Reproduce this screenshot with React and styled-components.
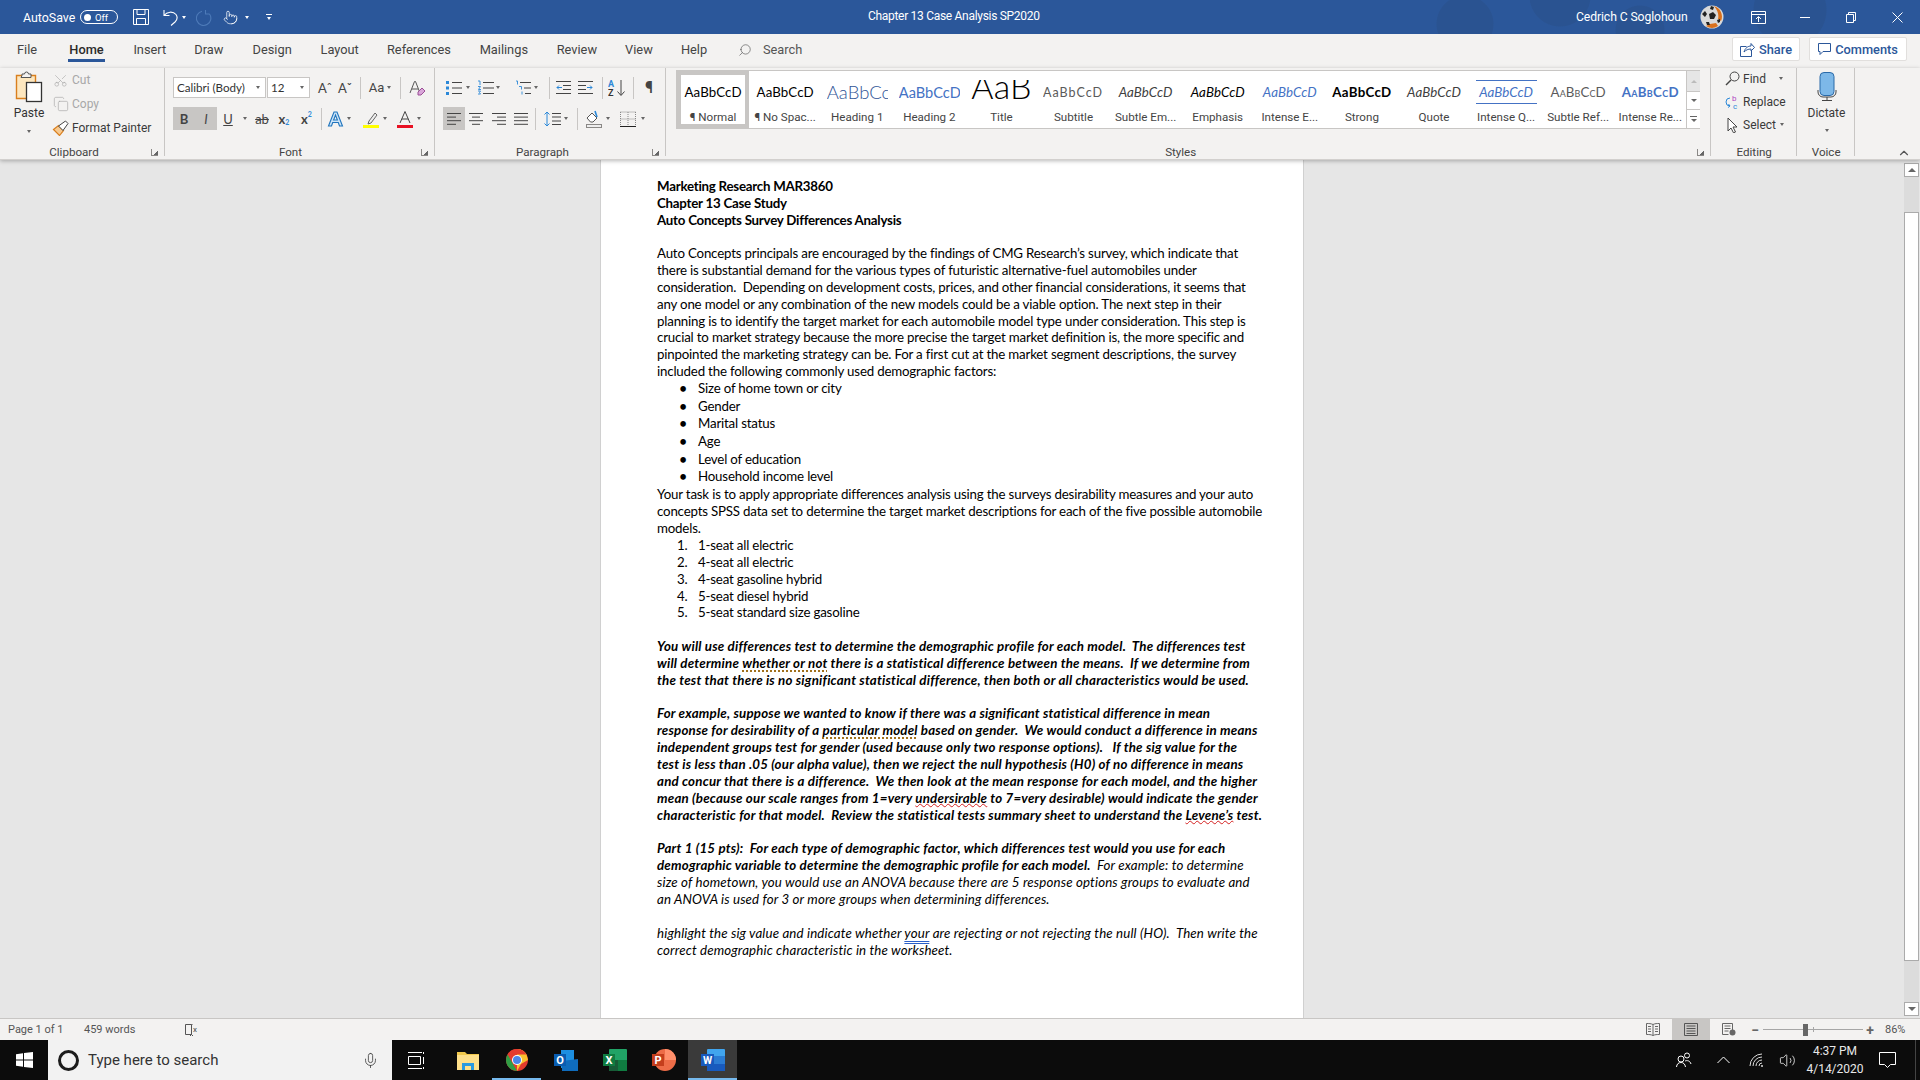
import React from 'react';
import styled, { createGlobalStyle } from 'styled-components';
import { Search, Scissors, Copy, Mic, Pointer, ChevronUp, Volume2 } from 'lucide-react';

const UI_FONT = 'Roboto, "Open Sans", sans-serif';
const DOC_FONT = 'Lato, "Open Sans", sans-serif';

const GlobalStyle = createGlobalStyle`
  html, body { margin: 0; padding: 0; background: #e6e6e6; }
  body { font-family: ${UI_FONT}; overflow: hidden; }
  * { box-sizing: border-box; }
`;

const Shell = styled.div`
  width: 1920px;
  height: 1080px;
  display: flex;
  flex-direction: column;
  overflow: hidden;
`;

/* title bar */
const TitleBar = styled.div`
  height: 34px;
  flex: none;
  display: flex;
  align-items: center;
  color: #fff;
  font-size: 12.4px;
  background-color: #2b579a;
  background-image:
    radial-gradient(circle at 1465px 24px, #2a5391 0 28px, transparent 29px),
    radial-gradient(circle at 1560px -4px, #2a5391 0 30px, transparent 31px),
    radial-gradient(circle at 1640px 30px, #2a5391 0 24px, transparent 25px),
    radial-gradient(circle at 1790px 10px, #2a5391 0 36px, transparent 37px);
`;
const AutoSave = styled.span`
  margin-left: 23px;
  width: 57px;
`;
const Toggle = styled.span`
  width: 38px;
  height: 14px;
  border: 1px solid #fff;
  border-radius: 7px;
  display: flex;
  align-items: center;
  padding-left: 3px;
  gap: 4px;
  font-size: 9.5px;
  margin-right: 15px;
  &::before {
    content: '';
    width: 7px;
    height: 7px;
    border-radius: 50%;
    background: #fff;
  }
`;
const TitleSlot = styled.span`
  width: ${p => p.$w}px;
  flex: none;
  display: flex;
  align-items: center;
  gap: ${p => p.$gap ?? 4}px;
  flex-direction: ${p => (p.$stack ? 'column' : 'row')};
`;
const DocName = styled.span`
  margin-left: 595px;
  width: 708px;
  font-size: 12px;
  letter-spacing: -0.3px;
  margin-top: -2px;
`;
const UserName = styled.span`
  width: 124px;
  font-size: 12.2px;
  letter-spacing: -0.1px;
`;
const WinButton = styled.span`
  width: ${p => p.$w}px;
  flex: none;
  display: flex;
  justify-content: center;
`;
const TinyCaret = styled.span`
  display: block;
  flex: none;
  width: 0;
  height: 0;
  border-left: ${p => p.$s || 2.5}px solid transparent;
  border-right: ${p => p.$s || 2.5}px solid transparent;
  border-top: ${p => (p.$s ? p.$s : 3)}px solid ${p => p.$c || '#666'};
  transform: ${p => (p.$up ? 'rotate(180deg)' : 'none')};
  margin-left: ${p => p.$ml || 0}px;
`;

/* tabs */
const TabRow = styled.div`
  height: 34px;
  flex: none;
  display: flex;
  align-items: flex-start;
  background: #f3f2f1;
  padding-left: 17px;
  padding-top: 3px;
  gap: 28.4px;
`;
const Tab = styled.span`
  width: ${p => p.$w}px;
  flex: none;
  height: 25px;
  margin-right: ${p => p.$mr || 0}px;
  line-height: 26px;
  text-align: center;
  font-size: 12.8px;
  white-space: nowrap;
  color: ${p => (p.$on ? '#2b2b2b' : '#444')};
  font-weight: ${p => (p.$on ? 500 : 400)};
  border-bottom: ${p => (p.$on ? '3px solid #2b579a' : '0')};
`;
const SearchBox = styled.span`
  display: flex;
  align-items: center;
  gap: 11px;
  height: 26px;
  margin-left: 2px;
  font-size: 12.8px;
  color: #555;
  line-height: 1;
`;
const ShareRow = styled.div`
  margin-left: auto;
  display: flex;
  gap: 9px;
  padding-right: 13px;
`;
const ShareButton = styled.span`
  width: ${p => p.$w}px;
  height: 24px;
  background: #fff;
  border: 1px solid #e1dfdd;
  border-radius: 2px;
  color: #2b579a;
  font-size: 12.8px;
  font-weight: 500;
  display: flex;
  align-items: center;
  justify-content: center;
  gap: 4px;
`;

/* ribbon */
const Ribbon = styled.div`
  height: 92px;
  flex: none;
  display: flex;
  align-items: flex-start;
  background: #f3f2f1;
  box-shadow: 0 1px 4px rgba(0, 0, 0, 0.28);
  border-bottom: 1px solid #d2d0ce;
  position: relative;
  z-index: 2;
  color: #444;
  font-size: 11.6px;
`;
const Group = styled.div`
  width: ${p => p.$w}px;
  height: 88px;
  flex: none;
  display: flex;
  flex-direction: column;
  border-right: 1px solid #c8c6c4;
`;
const GroupBody = styled.div`
  height: 76px;
  flex: none;
  display: flex;
  flex-direction: ${p => (p.$rows ? 'column' : 'row')};
  padding-left: ${p => p.$pad || 0}px;
  padding-top: ${p => (p.$rows ? 9 : 0)}px;
`;
const Foot = styled.div`
  height: 12px;
  display: grid;
  grid-template-columns: 1fr auto 1fr;
  line-height: 16px;
  font-size: 11.6px;
  color: #444;
  padding-right: 6px;
`;
const FootLabel = styled.span`
  grid-column: 2;
  transform: translateX(${p => p.$x || 0}px);
`;
const Launcher = styled.span`
  grid-column: 3;
  justify-self: end;
  width: 7px;
  height: 7px;
  margin-top: 5px;
  border-left: 1px solid #8a8886;
  border-bottom: 1px solid #8a8886;
  position: relative;
  &::after {
    content: '';
    position: absolute;
    right: 0;
    bottom: 0;
    width: 4px;
    height: 4px;
    background: linear-gradient(135deg, transparent 45%, #666 50%);
  }
`;
const PasteButton = styled.div`
  width: 46px;
  margin-left: 6px;
  flex: none;
  display: flex;
  flex-direction: column;
  align-items: center;
  padding-top: 3px;
  font-size: 12px;
  color: #333;
`;
const PasteLabel = styled.span`
  margin-top: ${p => p.$mt ?? 2}px;
  line-height: 16px;
`;
const StackCaret = styled.span`
  margin-top: ${p => p.$mt ?? 9}px;
`;
const SmallStack = styled.div`
  display: flex;
  flex-direction: column;
`;
const SmallRow = styled.div`
  height: ${p => p.$h || 24}px;
  display: flex;
  align-items: center;
  gap: ${p => p.$gap ?? 3}px;
  font-size: 12px;
  color: ${p => (p.$off ? '#a8a8a8' : '#3a3a3a')};
  white-space: nowrap;
`;
const IconCol = styled.span`
  width: ${p => p.$w || 17}px;
  flex: none;
  display: flex;
  justify-content: center;
`;
const ToolRow = styled.div`
  height: ${p => p.$h}px;
  flex: none;
  display: flex;
  align-items: center;
  margin-bottom: ${p => p.$mb || 0}px;
`;
const Tool = styled.span`
  width: ${p => p.$w}px;
  height: 23px;
  flex: none;
  display: flex;
  align-items: center;
  justify-content: ${p => (p.$left ? 'flex-start' : 'center')};
  gap: ${p => p.$gap ?? 3}px;
  padding-left: ${p => p.$pl || 0}px;
  margin-left: ${p => p.$ml || 0}px;
  background: ${p => (p.$on ? '#c8c6c4' : 'transparent')};
  color: #444;
  font-family: ${p => (p.$doc ? DOC_FONT : UI_FONT)};
  font-size: ${p => p.$fs || 13}px;
  font-weight: ${p => p.$fw || 400};
  font-style: ${p => (p.$it ? 'italic' : 'normal')};
  text-decoration: ${p => p.$deco || 'none'};
`;
const Script = styled.span`
  font-size: 7px;
  line-height: 7px;
  color: #2b88d8;
  transform: translateY(${p => (p.$up ? -4 : 4)}px);
`;
const Combo = styled.span`
  width: ${p => p.$w}px;
  height: 21px;
  flex: none;
  background: #fff;
  border: 1px solid #c8c6c4;
  margin-right: 1px;
  display: flex;
  align-items: center;
  justify-content: space-between;
  padding: 0 5px 0 3px;
  font-family: ${DOC_FONT};
  font-size: 11.6px;
  color: #333;
`;
const Sep = styled.span`
  width: 1px;
  height: 22px;
  flex: none;
  background: #c8c6c4;
  margin: 0 ${p => p.$r ?? 3}px 0 ${p => p.$l ?? 3}px;
`;

/* style gallery */
const Gallery = styled.div`
  width: 1024px;
  height: 59px;
  margin-top: 2px;
  display: flex;
  background: #fff;
  border: 1px solid #c8c6c4;
  flex: none;
`;
const GalleryItems = styled.div`
  flex: 1;
  display: flex;
`;
const StyleItem = styled.div`
  width: 72.1px;
  flex: none;
  height: 57px;
  padding-top: ${p => (p.$on ? 5 : 9)}px;
  border: ${p => (p.$on ? '4px solid #c8c6c4' : '0')};
  display: flex;
  flex-direction: column;
  align-items: center;
`;
const Sample = styled.div`
  width: 61px;
  height: 24px;
  flex: none;
  overflow: hidden;
  white-space: nowrap;
  display: flex;
  align-items: center;
  justify-content: ${p => (p.$clip ? 'flex-start' : 'center')};
  font-family: ${DOC_FONT};
  font-size: ${p => p.$fs || 13.3}px;
  font-weight: ${p => p.$fw || 400};
  font-style: ${p => (p.$it ? 'italic' : 'normal')};
  font-variant: ${p => (p.$caps ? 'small-caps' : 'normal')};
  letter-spacing: ${p => p.$ls ?? 0.1}px;
  color: ${p => p.$c || '#000'};
  border-top: ${p => (p.$rule ? '1px solid #4472c4' : '0')};
  border-bottom: ${p => (p.$rule ? '1px solid #4472c4' : '0')};
`;
const TitleSample = styled(Sample)`
  font-size: 34px;
  line-height: 24px;
  align-items: flex-start;
  font-weight: 300;
  span { display: block; margin-top: -6px; }
`;
const StyleLabel = styled.div`
  margin-top: 4px;
  line-height: 18px;
  font-size: 11.6px;
  color: #444;
  white-space: nowrap;
`;
const GalleryScroll = styled.div`
  width: 14px;
  flex: none;
  margin-left: auto;
  display: flex;
  flex-direction: column;
  border-left: 1px solid #c8c6c4;
`;
const GalleryBtn = styled.div`
  height: ${p => p.$h}px;
  flex: none;
  display: flex;
  flex-direction: column;
  gap: 2px;
  align-items: center;
  justify-content: center;
  background: ${p => (p.$off ? '#e6e6e6' : '#fff')};
  border-bottom: ${p => (p.$last ? 0 : '1px solid #c8c6c4')};
`;
const MoreBar = styled.span`
  width: ${p => p.$w || 7}px;
  height: 1px;
  background: ${p => p.$c || '#666'};
`;
const EditStack = styled.div`
  display: flex;
  flex-direction: column;
  padding-left: 13px;
  margin-top: -1px;
  color: #3a3a3a;
`;
const VoiceCol = styled.div`
  width: 57px;
  display: flex;
  flex-direction: column;
  align-items: center;
  padding: 4px 0 0 2px;
  font-size: 12px;
  color: #3a3a3a;
`;
const Collapse = styled.div`
  margin-left: 42px;
  margin-top: 78px;
  color: #555;
  display: flex;
`;

/* document */
const Canvas = styled.div`
  flex: 1;
  display: flex;
  background: #e6e6e6;
  min-height: 0;
`;
const PageArea = styled.div`
  flex: 1;
  display: flex;
  justify-content: center;
`;
const Page = styled.div`
  width: 704px;
  height: 100%;
  background: #fff;
  border-left: 1px solid #d0d0d0;
  border-right: 1px solid #d0d0d0;
  padding: 17.9px 0 0 56px;
  color: #000;
  font-family: ${DOC_FONT};
  font-size: 13.3px;
  font-kerning: normal;
`;
const spacingOf = p => {
  if (p.$b && p.$i) return 0.2;
  if (p.$i) return 0.14;
  if (p.$b) return -0.24;
  return -0.19;
};
const Line = styled.div`
  height: ${p => p.$h || 17}px;
  line-height: ${p => p.$h || 17}px;
  white-space: pre;
  padding-left: ${p => (p.$item ? 41 : 0)}px;
  font-weight: ${p => (p.$b ? 700 : 400)};
  font-style: ${p => (p.$i ? 'italic' : 'normal')};
  letter-spacing: ${spacingOf}px;
  display: flex;
`;
const Marker = styled.span`
  width: 18px;
  margin-left: -24px;
  margin-right: 6px;
  flex: none;
  text-align: ${p => (p.$num ? 'left' : 'center')};
  padding-left: ${p => (p.$num ? 3 : 0)}px;
  font-size: ${p => (p.$num ? 13.3 : 15)}px;
`;
const Plain = styled.span`
  font-weight: 400;
  letter-spacing: 0.14px;
`;
const Grammar = styled.span`
  text-decoration: underline dotted #a0701c 2px;
  text-underline-offset: 3px;
`;
const Spell = styled.span`
  text-decoration: underline wavy #d42020 1px;
  text-underline-offset: 0;
`;
const Clarity = styled.span`
  text-decoration: underline double #2b5fc7 1px;
  text-underline-offset: 3px;
`;
const ScrollBar = styled.div`
  width: 15px;
  margin-right: 1px;
  flex: none;
  display: flex;
  flex-direction: column;
  padding-top: 3px;
  padding-bottom: 2px;
`;
const ScrollBtn = styled.div`
  height: 14px;
  flex: none;
  background: #fff;
  border: 1px solid #ababab;
  display: flex;
  align-items: center;
  justify-content: center;
`;
const ScrollTrack = styled.div`
  flex: 1;
  background: #dcdcdc;
  display: flex;
  flex-direction: column;
  padding-top: 35px;
  padding-bottom: 41px;
`;
const ScrollThumb = styled.div`
  flex: 1;
  background: #fff;
  border: 1px solid #ababab;
`;

/* status bar */
const StatusBar = styled.div`
  height: 22px;
  flex: none;
  display: flex;
  align-items: center;
  background: #f3f2f1;
  border-top: 1px solid #c8c6c4;
  font-size: 11px;
  color: #555;
  padding-left: 8px;
`;
const StatusText = styled.span`
  width: ${p => p.$w}px;
  flex: none;
`;
const ViewBtn = styled.span`
  width: ${p => p.$w}px;
  height: 21px;
  flex: none;
  display: flex;
  align-items: center;
  justify-content: center;
  background: ${p => (p.$on ? '#c8c6c4' : 'transparent')};
`;
const Zoomer = styled.span`
  width: 100px;
  height: 1px;
  flex: none;
  background: #a6a6a6;
  margin: 0 -6px 0 5px;
  display: flex;
  align-items: center;
  padding-left: 40px;
  gap: 5px;
`;
const ZoomThumb = styled.span`
  width: 5px;
  height: 12px;
  background: #666;
  flex: none;
`;
const ZoomTick = styled.span`
  width: 1px;
  height: 5px;
  background: #a6a6a6;
  flex: none;
`;
const ZoomSign = styled.span`
  font-size: 14px;
  font-weight: 700;
  color: #666;
  width: 6px;
  line-height: 1;
  display: flex;
  justify-content: center;
`;

/* taskbar */
const Taskbar = styled.div`
  height: 40px;
  flex: none;
  display: flex;
  align-items: stretch;
  background: #0c0c0c;
  color: #fff;
`;
const StartBtn = styled.div`
  width: 48px;
  flex: none;
  display: flex;
  align-items: center;
  justify-content: center;
`;
const TaskSearch = styled.div`
  width: 344px;
  flex: none;
  background: #f2f2f2;
  color: #333;
  display: flex;
  align-items: center;
  padding-left: 10px;
  font-family: ${UI_FONT};
  font-size: 15px;
`;
const Ring = styled.span`
  width: 21px;
  height: 21px;
  border: 3px solid #1c1c1c;
  border-radius: 50%;
  flex: none;
  margin-right: 9px;
`;
const TaskMic = styled.span`
  margin-left: auto;
  margin-right: 13px;
  display: flex;
`;
const TaskIcon = styled.div`
  width: ${p => p.$w || 49}px;
  flex: none;
  display: flex;
  align-items: center;
  justify-content: center;
  background: ${p => (p.$active ? '#3a3a3a' : 'transparent')};
  margin-right: ${p => p.$mr || 0}px;
  border-bottom: ${p => (p.$run ? '2px solid #76b9ed' : '2px solid transparent')};
  border-top: 2px solid transparent;
`;
const Tray = styled.div`
  margin-left: auto;
  display: flex;
  align-items: center;
  padding-right: 4px;
`;
const TrayIcon = styled.span`
  width: ${p => p.$w}px;
  flex: none;
  display: flex;
  justify-content: center;
`;
const Clock = styled.div`
  width: 70px;
  flex: none;
  text-align: center;
  font-size: 12px;
  line-height: 18px;
  color: #e8e8e8;
`;
const ShowDesktop = styled.span`
  width: 1px;
  align-self: stretch;
  margin-left: 11px;
  background: #444;
`;

/* small drawings */
const Ico = ({ w = 16, h = 16, vb, children, c = '#555', sw = 1 }) => (
  <svg width={w} height={h} viewBox={vb || `0 0 ${w} ${h}`} fill="none" stroke={c} strokeWidth={sw} style={{ display: 'block', flex: 'none' }}>
    {children}
  </svg>
);

const LinesIcon = ({ rows, c = '#444' }) => (
  <Ico w={18} h={16} c={c}>
    {rows.map(([x1, x2], i) => (
      <line key={i} x1={x1} x2={x2} y1={2.5 + i * 3.6} y2={2.5 + i * 3.6} />
    ))}
  </Ico>
);

const styleItems = [
  { label: '¶ Normal', text: 'AaBbCcD' },
  { label: '¶ No Spac...', text: 'AaBbCcD' },
  { label: 'Heading 1', text: 'AaBbCcD', $fs: 18.5, $c: '#2f5496', $fw: 300, $ls: 0, $clip: true },
  { label: 'Heading 2', text: 'AaBbCcD', $fs: 14.6, $c: '#4472c4', $ls: 0, $clip: true },
  { label: 'Title', text: 'AaB' },
  { label: 'Subtitle', text: 'AaBbCcD', $c: '#5a5a5a', $ls: 1, $fs: 12.5, $clip: true },
  { label: 'Subtle Em...', text: 'AaBbCcD', $it: true, $c: '#404040' },
  { label: 'Emphasis', text: 'AaBbCcD', $it: true },
  { label: 'Intense E...', text: 'AaBbCcD', $it: true, $c: '#4472c4' },
  { label: 'Strong', text: 'AaBbCcD', $fw: 700, $ls: 0.3 },
  { label: 'Quote', text: 'AaBbCcD', $it: true, $c: '#404040' },
  { label: 'Intense Q...', text: 'AaBbCcD', $it: true, $c: '#4472c4', $rule: true },
  { label: 'Subtle Ref...', text: 'AaBbCcD', $caps: true, $c: '#5a5a5a' },
  { label: 'Intense Re...', text: 'AaBbCcD', $caps: true, $fw: 700, $c: '#4472c4', $ls: 0.3 },
];

const Groups = () => (
  <>
    <Group $w={165}>
      <GroupBody>
        <PasteButton>
          <Ico w={28} h={32}>
            <path d="M1.5 4.5h19v23h-19z" stroke="#d97f1e" strokeWidth="1.4" fill="#fde7bf" />
            <path d="M7 4.5V3h2.5a2 2 0 0 1 4 0H16v3.5H6z" stroke="#555" fill="#f3f2f1" />
            <rect x="11.5" y="11.5" width="15" height="19" fill="#fff" stroke="#333" strokeWidth="1.3" />
          </Ico>
          <PasteLabel>Paste</PasteLabel>
          <StackCaret><TinyCaret /></StackCaret>
        </PasteButton>
        <SmallStack>
          <SmallRow $off><IconCol><Scissors size={15} strokeWidth={1} color="#a8a8a8" style={{ transform: 'rotate(-90deg)' }} /></IconCol>Cut</SmallRow>
          <SmallRow $off><IconCol><Copy size={16} strokeWidth={1} color="#a8a8a8" /></IconCol>Copy</SmallRow>
          <SmallRow>
            <IconCol>
              <Ico w={17} h={16}>
                <path d="M1.5 9.5l5-4 5 5-4 5z" fill="#f7c98f" stroke="#d97f1e" strokeWidth="1.2" />
                <path d="M6.5 6l7-5 2.5 2.5-5 7z" fill="#fff" stroke="#444" />
              </Ico>
            </IconCol>
            Format Painter
          </SmallRow>
        </SmallStack>
      </GroupBody>
      <Foot><FootLabel $x={-5}>Clipboard</FootLabel><Launcher /></Foot>
    </Group>

    <Group $w={270}>
      <GroupBody $rows $pad={8}>
        <ToolRow $h={21} $mb={9}>
          <Combo $w={93}>Calibri (Body)<TinyCaret /></Combo>
          <Combo $w={43}>12<TinyCaret /></Combo>
          <Tool $w={20} $doc $ml={4}>Aˆ</Tool>
          <Tool $w={20} $doc>Aˇ</Tool>
          <Sep $l={5} $r={0} />
          <Tool $w={38} $gap={3}>Aa<TinyCaret /></Tool>
          <Sep $l={1} $r={2} />
          <Tool $w={28}>
            <Ico w={17} h={16}>
              <path d="M1 13L5.5 1.5h1L11 13M3 9h6" stroke="#555" />
              <path d="M9 12l4-4 3 3-4 4H9z" fill="#d9a6d9" stroke="#9b4f96" />
            </Ico>
          </Tool>
        </ToolRow>
        <ToolRow $h={23}>
          <Tool $w={22} $on $fw={700} $doc>B</Tool>
          <Tool $w={22} $on $it $doc>I</Tool>
          <Tool $w={22} $doc $deco="underline">U</Tool>
          <Tool $w={12}><TinyCaret /></Tool>
          <Tool $w={22} $doc $deco="line-through">ab</Tool>
          <Tool $w={22} $fw={700} $gap={0} $doc>x<Script>2</Script></Tool>
          <Tool $w={23} $fw={700} $gap={0} $doc>x<Script $up>2</Script></Tool>
          <Sep $l={3} $r={2} />
          <Tool $w={30} $gap={2}>
            <Ico w={18} h={18}>
              <path d="M1.5 16L7 2h3l5.5 14h-3l-1.2-3.5H5.7L4.5 16zM6.6 10h3.8L8.5 5z" fill="#cde4f7" stroke="#1f74bd" strokeWidth="1.1" />
            </Ico>
            <TinyCaret />
          </Tool>
          <Tool $w={34} $gap={4} $ml={4}>
            <Ico w={16} h={18}>
              <path d="M6 11l6-8 2 2-6 8-3 1z" fill="#eee" stroke="#666" />
              <rect x="0" y="15" width="16" height="3" fill="#ffff00" stroke="none" />
            </Ico>
            <TinyCaret />
          </Tool>
          <Tool $w={34} $gap={4}>
            <Ico w={16} h={18}>
              <path d="M3 13L8 1.5 13 13M4.8 9h6.4" stroke="#444" />
              <rect x="0" y="15" width="16" height="3" fill="#e81123" stroke="none" />
            </Ico>
            <TinyCaret />
          </Tool>
        </ToolRow>
      </GroupBody>
      <Foot><FootLabel $x={-6}>Font</FootLabel><Launcher /></Foot>
    </Group>

    <Group $w={231}>
      <GroupBody $rows $pad={8}>
        <ToolRow $h={21} $mb={9}>
          <Tool $w={33} $left $pl={3} $gap={2}>
            <Ico w={18} h={16}>
              <rect x="0" y="1" width="3" height="3" fill="#2b88d8" stroke="none" />
              <rect x="0" y="6.5" width="3" height="3" fill="#2b88d8" stroke="none" />
              <rect x="0" y="12" width="3" height="3" fill="#2b88d8" stroke="none" />
              <path d="M6 2.5h10M6 8h10M6 13.5h10" stroke="#444" />
            </Ico>
            <TinyCaret />
          </Tool>
          <Tool $w={38} $left $pl={1} $gap={1}>
            <Ico w={18} h={16}>
              <path d="M1 1h2v4M1 6.5h2.5l-2 3h2.5M1 11h2.5l-1 1.5 1 1.5H1" stroke="#2b88d8" strokeWidth="0.9" />
              <path d="M6 2.5h11M6 8h11M6 13.5h11" stroke="#444" />
            </Ico>
            <TinyCaret />
          </Tool>
          <Tool $w={31} $left $pl={1} $gap={1}>
            <Ico w={18} h={16}>
              <path d="M1 1h1.5v3.5M4 6.5h2.5v3M7 11.5v3" stroke="#2b88d8" strokeWidth="0.9" />
              <path d="M5 2.5h11M9 8h7M10 13.5h6" stroke="#444" />
            </Ico>
            <TinyCaret />
          </Tool>
          <Sep $l={4} $r={3} />
          <Tool $w={22}>
            <Ico>
              <path d="M0 1.5h15M7 5.5h8M7 9.5h8M0 13.5h15" stroke="#444" />
              <path d="M6 7.5H1M3 5.5l-2 2 2 2" stroke="#2b88d8" />
            </Ico>
          </Tool>
          <Tool $w={22}>
            <Ico>
              <path d="M0 1.5h15M0 5.5h8M0 9.5h8M0 13.5h15" stroke="#444" />
              <path d="M9 7.5h5M12 5.5l2 2-2 2" stroke="#2b88d8" />
            </Ico>
          </Tool>
          <Sep $l={5} $r={2} />
          <Tool $w={24}>
            <Ico w={18} h={18}>
              <text x="0" y="8" fontFamily={UI_FONT} fontSize="9" fontWeight="700" fill="#2b88d8" stroke="none">A</text>
              <text x="0" y="17" fontFamily={UI_FONT} fontSize="9" fontWeight="700" fill="#333" stroke="none">Z</text>
              <path d="M13 1v15M9.5 12.5L13 16.5l3.5-4" stroke="#444" />
            </Ico>
          </Tool>
          <Sep $l={4} $r={3} />
          <Tool $w={24} $fs={16} $fw={700}>¶</Tool>
        </ToolRow>
        <ToolRow $h={23}>
          <Tool $w={22} $on><LinesIcon rows={[[2, 16], [2, 11], [2, 16], [2, 11]]} /></Tool>
          <Tool $w={22}><LinesIcon rows={[[2, 16], [5, 13], [2, 16], [5, 13]]} /></Tool>
          <Tool $w={23}><LinesIcon rows={[[2, 16], [7, 16], [2, 16], [7, 16]]} /></Tool>
          <Tool $w={22}><LinesIcon rows={[[2, 16], [2, 16], [2, 16], [2, 16]]} /></Tool>
          <Sep $l={3} $r={4} />
          <Tool $w={32} $gap={3}>
            <Ico w={17} h={16}>
              <path d="M3 1v14M0.5 3.5L3 1l2.5 2.5M0.5 12.5L3 15l2.5-2.5" stroke="#2b88d8" />
              <path d="M8 2.5h9M8 6h9M8 10h9M8 13.5h9" stroke="#444" />
            </Ico>
            <TinyCaret />
          </Tool>
          <Sep $l={5} $r={3} />
          <Tool $w={34} $gap={4}>
            <Ico w={16} h={18}>
              <path d="M1 8l5-5 5 5-4 4-2.5 0z" stroke="#555" fill="#fff" />
              <path d="M9 1l2 6" stroke="#2b88d8" strokeWidth="1.6" />
              <rect x="0.5" y="14.5" width="15" height="3" fill="#eee" stroke="#8a8886" />
            </Ico>
            <TinyCaret />
          </Tool>
          <Tool $w={34} $gap={5}>
            <Ico w={16} h={16}>
              <path d="M.5 1h15M.5 8h15M8 1v14M.5 1v14M15.5 1v14" stroke="#888" strokeDasharray="1 1" />
              <path d="M0 15.5h16" stroke="#222" />
            </Ico>
            <TinyCaret />
          </Tool>
        </ToolRow>
      </GroupBody>
      <Foot><FootLabel $x={-4.6}>Paragraph</FootLabel><Launcher /></Foot>
    </Group>

    <Group $w={1045}>
      <GroupBody $pad={10}>
        <Gallery>
          <GalleryItems>
            {styleItems.map(({ label, text, ...s }) => (
              <StyleItem key={label} $on={label === '¶ Normal'}>
                {label === 'Title' ? <TitleSample {...s}><span>{text}</span></TitleSample> : <Sample {...s}>{text}</Sample>}
                <StyleLabel>{label}</StyleLabel>
              </StyleItem>
            ))}
          </GalleryItems>
          <GalleryScroll>
            <GalleryBtn $h={21} $off><TinyCaret $s={3.5} $c="#bbb" $up /></GalleryBtn>
            <GalleryBtn $h={18}><TinyCaret $s={3} /></GalleryBtn>
            <GalleryBtn $h={18} $last><MoreBar /><TinyCaret $s={3} /></GalleryBtn>
          </GalleryScroll>
        </Gallery>
      </GroupBody>
      <Foot><FootLabel $x={-4.3}>Styles</FootLabel><Launcher /></Foot>
    </Group>

    <Group $w={86}>
      <GroupBody>
        <EditStack>
          <SmallRow $h={23} $gap={2}>
            <IconCol $w={17}>
              <Ico w={15} h={15}><circle cx="9.5" cy="5.5" r="4.5" stroke="#444" /><path d="M6 9L1 14" stroke="#444" strokeWidth="1.5" /></Ico>
            </IconCol>
            Find<TinyCaret $ml={11} />
          </SmallRow>
          <SmallRow $h={23} $gap={2}>
            <IconCol $w={17}>
              <Ico w={16} h={16}>
                <text x="7" y="7" fontFamily={UI_FONT} fontSize="8" fill="#b146c2" stroke="none">b</text>
                <text x="8" y="15" fontFamily={UI_FONT} fontSize="8" fill="#2b88d8" stroke="none">c</text>
                <path d="M5 4a4 4 0 0 0 0 8M3.5 10L5 12l-2 1.5" stroke="#2b88d8" />
              </Ico>
            </IconCol>
            Replace
          </SmallRow>
          <SmallRow $h={23} $gap={2}>
            <IconCol $w={17}>
              <Ico w={13} h={16}><path d="M2 1l9 9H7l2.5 5-2 .8L5 11l-3 3z" stroke="#444" fill="#fff" /></Ico>
            </IconCol>
            Select<TinyCaret $ml={2} />
          </SmallRow>
        </EditStack>
      </GroupBody>
      <Foot><FootLabel $x={3.7}>Editing</FootLabel></Foot>
    </Group>

    <Group $w={58}>
      <GroupBody>
        <VoiceCol>
          <Ico w={20} h={29}>
            <rect x="3" y="0.5" width="14" height="23" rx="4" fill="#7db8e8" stroke="#2b6aa8" />
            <path d="M1 18v2a5 5 0 0 0 5 5h8a5 5 0 0 0 5-5v-2M10 25v3M5 28.5h10" stroke="#444" />
          </Ico>
          <PasteLabel $mt={4}>Dictate</PasteLabel>
          <StackCaret $mt={8}><TinyCaret /></StackCaret>
        </VoiceCol>
      </GroupBody>
      <Foot><FootLabel $x={3.7}>Voice</FootLabel></Foot>
    </Group>
    <Collapse><ChevronUp size={14} strokeWidth={2} /></Collapse>
  </>
);

const tabs = [
  ['File', 19, 3.6], ['Home', 37], ['Insert', 32], ['Draw', 30], ['Design', 40], ['Layout', 38],
  ['References', 64], ['Mailings', 49], ['Review', 40], ['View', 27], ['Help', 27],
];

const bullets = ['Size of home town or city', 'Gender', 'Marital status', 'Age', 'Level of education', 'Household income level'];
const models = ['1-seat all electric', '4-seat all electric', '4-seat gasoline hybrid', '5-seat diesel hybrid', '5-seat standard size gasoline'];

const Document = () => (
  <Page>
    <Line $h={16.85} $b>Marketing Research MAR3860</Line>
    <Line $h={16.85} $b>Chapter 13 Case Study</Line>
    <Line $h={16.85} $b>Auto Concepts Survey Differences Analysis</Line>
    <Line $h={16.85}> </Line>
    <Line $h={16.85}>Auto Concepts principals are encouraged by the findings of CMG Research’s survey, which indicate that</Line>
    <Line $h={16.85}>there is substantial demand for the various types of futuristic alternative-fuel automobiles under</Line>
    <Line $h={16.85}>consideration.  Depending on development costs, prices, and other financial considerations, it seems that</Line>
    <Line $h={16.85}>any one model or any combination of the new models could be a viable option. The next step in their</Line>
    <Line $h={16.85}>planning is to identify the target market for each automobile model type under consideration. This step is</Line>
    <Line $h={16.85}>crucial to market strategy because the more precise the target market definition is, the more specific and</Line>
    <Line $h={16.85}>pinpointed the marketing strategy can be. For a first cut at the market segment descriptions, the survey</Line>
    <Line $h={16.85}>included the following commonly used demographic factors:</Line>
    {bullets.map(b => <Line key={b} $h={17.7} $item><Marker>•</Marker>{b}</Line>)}
    <Line>Your task is to apply appropriate differences analysis using the surveys desirability measures and your auto</Line>
    <Line>concepts SPSS data set to determine the target market descriptions for each of the five possible automobile</Line>
    <Line>models.</Line>
    {models.map((m, i) => <Line key={m} $h={16.8} $item><Marker $num>{i + 1}.</Marker>{m}</Line>)}
    <Line $h={16.8}> </Line>
    <Line $b $i>You will use differences test to determine the demographic profile for each model.  The differences test</Line>
    <Line $b $i><span>will determine <Grammar>whether or not</Grammar> there is a statistical difference between the means.  If we determine from</span></Line>
    <Line $b $i>the test that there is no significant statistical difference, then both or all characteristics would be used.</Line>
    <Line $h={16}> </Line>
    <Line $b $i>For example, suppose we wanted to know if there was a significant statistical difference in mean</Line>
    <Line $b $i><span>response for desirability of a <Grammar>particular model</Grammar> based on gender.  We would conduct a difference in means</span></Line>
    <Line $b $i>independent groups test for gender (used because only two response options).   If the sig value for the</Line>
    <Line $b $i>test is less than .05 (our alpha value), then we reject the null hypothesis (H0) of no difference in means</Line>
    <Line $b $i>and concur that there is a difference.  We then look at the mean response for each model, and the higher</Line>
    <Line $b $i><span>mean (because our scale ranges from 1=very <Spell>undersirable</Spell> to 7=very desirable) would indicate the gender</span></Line>
    <Line $b $i><span>characteristic for that model.  Review the statistical tests summary sheet to understand the <Spell>Levene’s</Spell> test.</span></Line>
    <Line $h={16}> </Line>
    <Line $b $i>Part 1 (15 pts):  For each type of demographic factor, which differences test would you use for each</Line>
    <Line $b $i><span>demographic variable to determine the demographic profile for each model.  <Plain>For example: to determine</Plain></span></Line>
    <Line $i>size of hometown, you would use an ANOVA because there are 5 response options groups to evaluate and</Line>
    <Line $i>an ANOVA is used for 3 or more groups when determining differences.</Line>
    <Line> </Line>
    <Line $i><span>highlight the sig value and indicate whether <Clarity>your</Clarity> are rejecting or not rejecting the null (HO).  Then write the</span></Line>
    <Line $i>correct demographic characteristic in the worksheet.</Line>
  </Page>
);

const Avatar = () => (
  <svg width="24" height="24" viewBox="0 0 24 24" style={{ display: 'block', flex: 'none' }}>
    <circle cx="12" cy="12" r="11.5" fill="#d9d9d9" />
    <path d="M14 1a11 11 0 0 1 7 15l-3-2c1-4 0-8-4-13zM6 21a11 11 0 0 0 12 0l-2-3-6 1z" fill="#d9701c" />
    <path d="M9 9l4-2 3 3-2 4-4 0zM2 9l3-3 2 3-2 3zM11 1l3 1-1 3-3-1zM17 15l3-1 0 3-2 1zM6 17l3 0 1 3-3 0z" fill="#222" />
  </svg>
);

const App = () => (
  <Shell>
    <GlobalStyle />
    <TitleBar>
      <AutoSave>AutoSave</AutoSave>
      <Toggle>Off</Toggle>
      <TitleSlot $w={30}>
        <Ico w={16} h={16} c="#fff">
          <path d="M.5.5h15v15H.5zM4 .5v5h8v-5M3.5 15.5v-6h9v6" />
        </Ico>
      </TitleSlot>
      <TitleSlot $w={33}>
        <Ico w={15} h={17} c="#fff" sw={1.1}>
          <path d="M1 1v5.5h5.5M1 6.5C4 2.5 10 2 13 5.5c1.8 2.6 1 5.5-1 7.5l-4 3.5" />
        </Ico>
        <TinyCaret $c="#fff" />
      </TitleSlot>
      <TitleSlot $w={27}>
        <Ico w={17} h={17} c="#4d7ab8" sw={1.1}>
          <path d="M6 2.2A7.2 7.2 0 1 0 13.5 5M9.5 1v4h4" />
        </Ico>
      </TitleSlot>
      <TitleSlot $w={42} $gap={7}>
        <Pointer size={15} color="#fff" strokeWidth={1.2} />
        <TinyCaret $c="#fff" />
      </TitleSlot>
      <TitleSlot $w={8} $stack $gap={2}>
        <MoreBar $c="#fff" $w={6} />
        <TinyCaret $c="#fff" />
      </TitleSlot>
      <DocName>Chapter 13 Case Analysis SP2020</DocName>
      <UserName>Cedrich C Soglohoun</UserName>
      <Avatar />
      <WinButton $w={69}>
        <Ico w={15} h={13} c="#fff">
          <path d="M.5.5h14v12H.5zM.5 3.5h14M7.5 11V6M5 8l2.5-2.5L10 8" />
        </Ico>
      </WinButton>
      <WinButton $w={24}>
        <Ico w={10} h={10} c="#fff"><path d="M0 5.5h10" /></Ico>
      </WinButton>
      <WinButton $w={68}>
        <Ico w={10} h={11} c="#fff"><path d="M.5 2.5h7v8h-7zM2.5 2.5v-2h7v8h-2" /></Ico>
      </WinButton>
      <WinButton $w={24}>
        <Ico w={11} h={11} c="#fff"><path d="M.5.5l10 10M10.5.5l-10 10" /></Ico>
      </WinButton>
    </TitleBar>

    <TabRow>
      {tabs.map(([t, w, mr]) => <Tab key={t} $w={w} $mr={mr} $on={t === 'Home'}>{t}</Tab>)}
      <SearchBox><Search size={14} strokeWidth={1} color="#444" style={{ transform: 'scaleX(-1)' }} />Search</SearchBox>
      <ShareRow>
        <ShareButton $w={68}>
          <Ico w={15} h={15} c="#2b579a">
            <path d="M.5 4.5h6M.5 4.5v10h11v-6M4 10c1-4 4-6 7-6V1.5l3.5 4-3.5 3.5V7c-3 0-5 1-7 3z" />
          </Ico>
          Share
        </ShareButton>
        <ShareButton $w={98}>
          <Ico w={13} h={13} c="#2b579a"><path d="M.5.5h12v8H5l-3 3v-3H.5z" /></Ico>
          Comments
        </ShareButton>
      </ShareRow>
    </TabRow>

    <Ribbon><Groups /></Ribbon>

    <Canvas>
      <PageArea><Document /></PageArea>
      <ScrollBar>
        <ScrollBtn><TinyCaret $s={4} $up /></ScrollBtn>
        <ScrollTrack><ScrollThumb /></ScrollTrack>
        <ScrollBtn><TinyCaret $s={4} /></ScrollBtn>
      </ScrollBar>
    </Canvas>

    <StatusBar>
      <StatusText $w={76}>Page 1 of 1</StatusText>
      <StatusText $w={101}>459 words</StatusText>
      <Ico w={14} h={14} c="#555"><path d="M.5 1.5h6v10h-6zM6.5 1.5h1M5 13l1.5-1.5L8 13" /><text x="8" y="9" fontSize="8" fontFamily={UI_FONT} fill="#444" stroke="none">x</text></Ico>
      <StatusText $w={1437} />
      <ViewBtn $w={33}>
        <Ico w={14} h={13} c="#666"><path d="M7 1.5C5 .5 3 .5.5.5v11c2.5 0 4.5 0 6.5 1 2-1 4-1 6.5-1V.5C11 .5 9 .5 7 1.5zM7 1.5V12.500M2 3.5h3M2 6h3M2 8.5h3M9 3.5h3M9 6h3M9 8.5h3" /></Ico>
      </ViewBtn>
      <StatusText $w={3} />
      <ViewBtn $w={38} $on>
        <Ico w={14} h={13} c="#555"><path d="M.5.5h13v12H.5zM2.5 3h9M2.5 5.5h9M2.5 8h9M2.5 10.5h9" /></Ico>
      </ViewBtn>
      <ViewBtn $w={37}>
        <Ico w={14} h={13} c="#666"><path d="M.5.5h10v7M.5.5v11h6M2.5 3h6M2.5 5.5h6M2.5 8h4" /><circle cx="10.5" cy="9.5" r="3" fill="#666" stroke="none" /></Ico>
      </ViewBtn>
      <StatusText $w={5} />
      <ZoomSign>−</ZoomSign>
      <Zoomer><ZoomThumb /><ZoomTick /></Zoomer>
      <StatusText $w={10} />
      <ZoomSign>+</ZoomSign>
      <StatusText $w={12} />
      <StatusText $w={24}>86%</StatusText>
    </StatusBar>

    <Taskbar>
      <StartBtn>
        <svg width="17" height="16" viewBox="0 0 17 16" style={{ display: 'block' }}>
          <path d="M0 2.3L7 1.3V7.6H0zM8 1.1L17 0V7.6H8zM0 8.5H7V14.8L0 13.8zM8 8.5H17V16L8 14.9z" fill="#fff" />
        </svg>
      </StartBtn>
      <TaskSearch>
        <Ring />
        Type here to search
        <TaskMic><Mic size={17} strokeWidth={1.1} color="#333" /></TaskMic>
      </TaskSearch>
      <TaskIcon $w={48} $mr={3}>
        <Ico w={17} h={17} c="#fff"><path d="M0 .5h14M0 16.5h14M.5 4.5h12v8H.5zM15.5 0v2M15.5 5v7M15.5 15v2" /></Ico>
      </TaskIcon>
      <TaskIcon>
        <svg width="22" height="20" viewBox="0 0 22 20" style={{ display: 'block' }}>
          <path d="M0 2h8l2 2h12v16H0z" fill="#f2c94c" />
          <path d="M0 5h22v15H0z" fill="#ffe08a" />
          <path d="M5 13h12v7h-3v-4H8v4H5z" fill="#2b9ae0" />
        </svg>
      </TaskIcon>
      <TaskIcon $run>
        <svg width="22" height="22" viewBox="0 0 22 22" style={{ display: 'block' }}>
          <circle cx="11" cy="11" r="11" fill="#e33b2e" />
          <path d="M11 22A11 11 0 0 1 1.5 5.5L7 15z" fill="#2f9e44" />
          <path d="M11 0a11 11 0 0 1 9.5 5.5L22 11l-7 4-4 7z" fill="#fbc02d" />
          <path d="M1.5 5.5A11 11 0 0 1 20.5 5.5H11z" fill="#e33b2e" />
          <circle cx="11" cy="11" r="5" fill="#fff" />
          <circle cx="11" cy="11" r="4" fill="#4a86e8" />
        </svg>
      </TaskIcon>
      <TaskIcon>
        <svg width="24" height="22" viewBox="0 0 24 22" style={{ display: 'block' }}>
          <rect x="7" y="1" width="13" height="18" fill="#1d8fe1" />
          <path d="M8 12l16-2v12H8z" fill="#0f6cbd" />
          <rect x="0" y="5" width="12" height="12" fill="#0a5cb0" />
          <text x="6" y="15" textAnchor="middle" fontFamily={UI_FONT} fontWeight="700" fontSize="11" fill="#fff">O</text>
        </svg>
      </TaskIcon>
      <TaskIcon>
        <svg width="24" height="22" viewBox="0 0 24 22" style={{ display: 'block' }}>
          <rect x="6" y="0" width="18" height="22" rx="1" fill="#21a366" />
          <rect x="15" y="11" width="9" height="11" fill="#107c41" />
          <rect x="6" y="11" width="9" height="11" fill="#185c37" />
          <rect x="0" y="5" width="12" height="12" fill="#107c41" />
          <text x="6" y="15" textAnchor="middle" fontFamily={UI_FONT} fontWeight="700" fontSize="11" fill="#fff">X</text>
        </svg>
      </TaskIcon>
      <TaskIcon>
        <svg width="24" height="22" viewBox="0 0 24 22" style={{ display: 'block' }}>
          <circle cx="13" cy="11" r="11" fill="#ed6c47" />
          <path d="M13 0a11 11 0 0 1 11 11H13z" fill="#ff8f6b" />
          <rect x="0" y="5" width="12" height="12" fill="#c43e1c" />
          <text x="6" y="15" textAnchor="middle" fontFamily={UI_FONT} fontWeight="700" fontSize="11" fill="#fff">P</text>
        </svg>
      </TaskIcon>
      <TaskIcon $active $run>
        <svg width="24" height="22" viewBox="0 0 24 22" style={{ display: 'block' }}>
          <rect x="6" y="0" width="18" height="22" rx="1" fill="#41a5ee" />
          <rect x="6" y="7" width="18" height="8" fill="#2b7cd3" />
          <rect x="6" y="15" width="18" height="7" fill="#185abd" />
          <rect x="0" y="5" width="13" height="12" fill="#185abd" />
          <text x="6.5" y="15" textAnchor="middle" fontFamily={UI_FONT} fontWeight="700" fontSize="10.5" fill="#fff">W</text>
        </svg>
      </TaskIcon>
      <Tray>
        <TrayIcon $w={47}>
          <Ico w={16} h={16} c="#fff"><circle cx="11" cy="3.5" r="2.5" /><circle cx="5" cy="7" r="3" /><path d="M.5 15c.3-3 2-4.5 4.5-4.5S9 12 9.5 15M9 9c2-.8 5-.5 6 3" /></Ico>
        </TrayIcon>
        <TrayIcon $w={32}>
          <Ico w={13} h={8} c="#fff"><path d="M.5 7L6.5 1l6 6" /></Ico>
        </TrayIcon>
        <TrayIcon $w={35}>
          <Ico w={15} h={14} c="#ddd">
            <path d="M1 13A12 12 0 0 1 13 1M4 13a9 9 0 0 1 9-9M7 13a6 6 0 0 1 6-6M10 13a3 3 0 0 1 3-3" />
            <circle cx="13" cy="13" r="1" fill="#ddd" stroke="none" />
          </Ico>
        </TrayIcon>
        <TrayIcon $w={26}><Volume2 size={17} strokeWidth={1.1} color="#fff" /></TrayIcon>
        <Clock>4:37 PM<br />4/14/2020</Clock>
        <TrayIcon $w={34}>
          <Ico w={17} h={16} c="#fff"><path d="M.5.5h16v12h-5L8.5 15.5 5.5 12.5h-5z" /></Ico>
        </TrayIcon>
        <ShowDesktop />
      </Tray>
    </Taskbar>
  </Shell>
);

export default App;
